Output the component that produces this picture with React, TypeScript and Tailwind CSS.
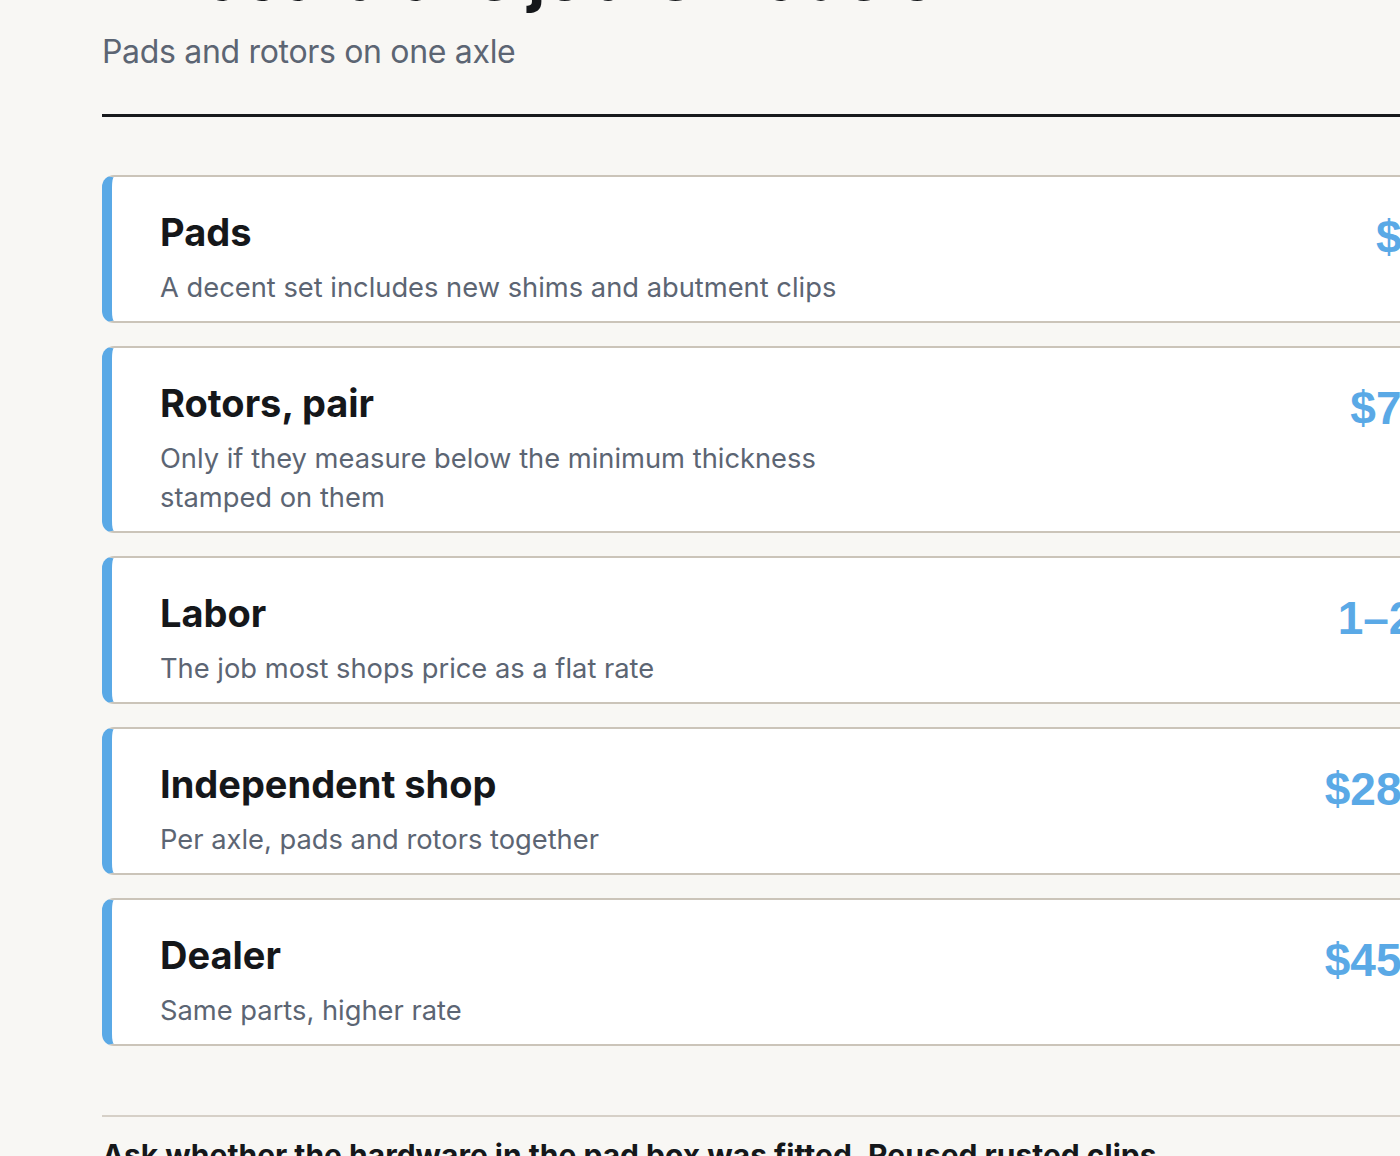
const items = [
  { name: "Pads", note: "A decent set includes new shims and abutment clips", price: "$35–$75" },
  { name: "Rotors, pair", note: "Only if they measure below the minimum thickness stamped on them", price: "$70–$150" },
  { name: "Labor", note: "The job most shops price as a flat rate", price: "1–2 hours" },
  { name: "Independent shop", note: "Per axle, pads and rotors together", price: "$280–$450" },
  { name: "Dealer", note: "Same parts, higher rate", price: "$450–$700" },
];

export default function App() {
  return (
    <div className="min-h-screen w-full overflow-hidden bg-[#f8f7f4] font-['Inter',sans-serif]">
      <div className="w-[1602px] pl-[102px]">
        <h1 className="-mt-[55px] text-[64px] font-bold leading-[64px] text-[#15171a]">
          What a brake job is made of
        </h1>
        <p className="mt-[23px] text-[32px] leading-[40px] tracking-[-0.01em] text-[#5c6573]">
          Pads and rotors on one axle
        </p>
        <div className="mt-[42px] h-[3px] bg-[#17191c]" />

        <div className="mt-[58px] flex flex-col gap-[23px]">
          {items.map((item) => (
            <div
              key={item.name}
              className="flex items-start justify-between rounded-xl border-2 border-l-[10px] border-[#cbc4b9] border-l-[#5aa9e6] bg-white pt-8 pr-[45px] pb-[14px] pl-12"
            >
              <div>
                <h2 className="text-[38px] font-bold leading-[46px] text-[#15171a]">{item.name}</h2>
                <p className="mt-[13px] max-w-[700px] text-[27.3px] leading-[39px] text-[#5c6573]">{item.note}</p>
              </div>
              <div className="mt-[5px] whitespace-nowrap font-['Liberation_Sans',Arial,sans-serif] text-[46px] font-bold leading-none text-[#5aa9e6]">
                {item.price}
              </div>
            </div>
          ))}
        </div>

        <div className="mt-[69px] h-[2px] bg-[#d6d0c7]" />
        <p className="mt-[18px] max-w-[1090px] text-[30px] font-bold leading-[40px] text-[#15171a]">
          Ask whether the hardware in the pad box was fitted. Reused rusted clips are the usual cause of a squeal after a new job.
        </p>
      </div>
    </div>
  );
}
